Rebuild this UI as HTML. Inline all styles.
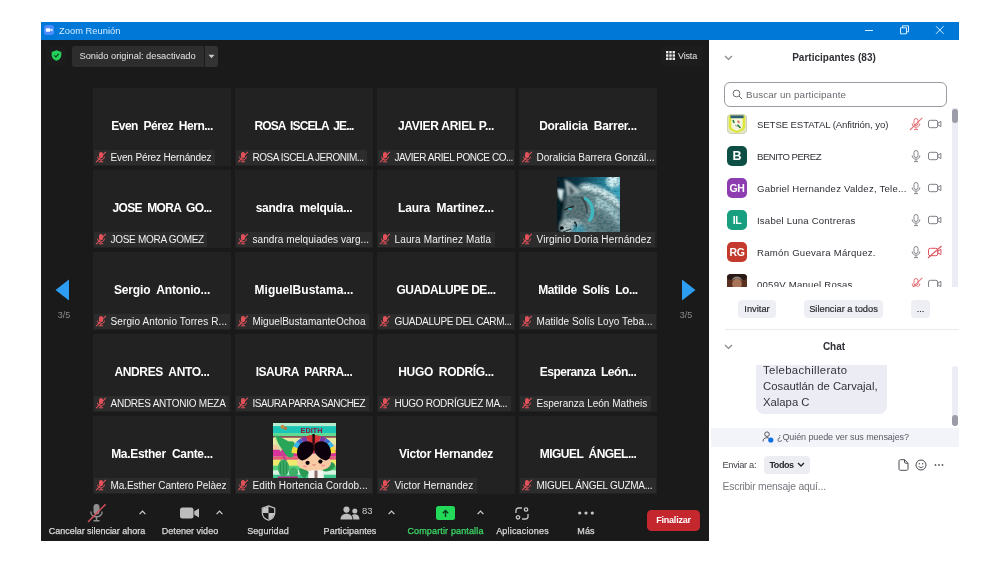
<!DOCTYPE html>
<html><head><meta charset="utf-8"><title>Zoom Reunión</title>
<style>
*{box-sizing:border-box;margin:0;padding:0}
html,body{width:1000px;height:563px;overflow:hidden;background:#fff;font-family:"Liberation Sans",sans-serif}
.abs{position:absolute}
#root{position:absolute;left:0;top:0;width:1000px;height:563px;will-change:transform;transform:translateZ(0)}
#win{position:absolute;left:41px;top:22px;width:918px;height:519px;background:#fff;overflow:hidden}
#title{position:absolute;left:0;top:0;width:918px;height:18px;background:#0078d7}
#title .tt{position:absolute;left:18px;top:3px;font-size:9.3px;line-height:12px;color:#d6ecff;white-space:pre}
#main{position:absolute;left:0;top:18px;width:668px;height:501px;background:#1a1a1a}
.tile{position:absolute;width:138px;height:78px;background:#222222;overflow:hidden}
.tile .big{position:absolute;left:0;right:0;top:29.5px;height:16px;line-height:16px;text-align:center;color:#fff;font-weight:700;font-size:12px;white-space:pre}
.tile .lab{position:absolute;left:1px;bottom:1px;height:15px;max-width:136px;background:#2c2c2c;color:#f2f2f2;font-size:10px;line-height:15px;padding:0 3.5px 0 16.5px;white-space:pre;overflow:hidden}
.tile .lab .mm{position:absolute;left:1.2px;top:0.7px}
.tile .pic{position:absolute;width:63px;height:63px;overflow:hidden}
.tb{position:absolute;top:525px;-webkit-text-stroke:0.250px #d8d8d8;height:12px;line-height:12px;font-size:9px;color:#d8d8d8;white-space:pre;text-align:center;transform:translateX(-50%)}
.chev{position:absolute}
#side{position:absolute;left:668px;top:18px;width:250px;height:500px;background:#fff}
.pname{position:absolute;left:757px;font-size:9.4px;line-height:12px;color:#2f2f36;white-space:pre}
.av{position:absolute;left:727px;width:20px;height:20px;border-radius:5px;color:#fff;font-weight:700;text-align:center;line-height:20px}
.btn{position:absolute;top:300px;height:18px;border-radius:4px;background:#eeeef5;color:#2a2a32;font-size:9.3px;line-height:18px;text-align:center;white-space:pre;-webkit-text-stroke:0.2px #2a2a32}
</style></head>
<body>
<div id="root">
<div id="win">
  <div id="title">
    <svg class="abs" style="left:3.300px;top:3.400px" width="10" height="10" viewBox="0 0 11 11"><rect width="11" height="11" rx="3" fill="#4a8cff"/><rect x="2" y="3.6" width="5" height="3.8" rx="1" fill="#fff"/><path d="M7.3 5.1L9.2 3.9v3.2L7.3 5.9z" fill="#fff"/></svg>
    <div class="tt"><span style="font-size:9.300px;font-weight:400;letter-spacing:0.038px">Zoom Reunión</span></div>
    <svg class="abs" style="left:822px;top:2px" width="84" height="14" viewBox="0 0 84 14"><g stroke="#d6f0ff" stroke-width="1" fill="none"><path d="M2 6.5h8"/><path d="M37.500 3.800h6v6h-6z"/><path d="M39.500 3.800v-2h6v6h-2"/><path d="M73 2.2l7.6 7.6M80.600 2.2L73 9.800"/></g></svg>
  </div>
</div>
<div id="main" style="left:41px;top:40px"></div>
<!-- top bar controls -->
<div class="abs" style="left:46px;top:46px;width:20px;height:20px;background:#1c1c1c;border-radius:2px"></div>
<svg class="abs" style="left:51px;top:50px" width="11" height="11" viewBox="0 0 11 11"><path d="M5.500 0.200L10.300 1.900v3.400c0 2.700-2.100 4.600-4.800 5.500C2.800 9.900 0.700 8 0.700 5.300V1.900z" fill="#23d05a"/><path d="M3.300 5.400l1.600 1.600L7.800 3.900" fill="none" stroke="#123d20" stroke-width="1.200"/></svg>
<div class="abs" style="left:72px;top:46px;width:132px;height:21px;background:#2d2d2d;border-radius:3px 0 0 3px"></div>
<div class="abs" style="left:205px;top:46px;width:13px;height:21px;background:#333333;border-radius:0 3px 3px 0"></div>
<div class="abs" style="left:79.500px;top:50px;font-size:9.300px;line-height:12px;color:#e4e4e4;white-space:pre"><span style="font-size:9.300px;font-weight:400;letter-spacing:-0.004px">Sonido original: desactivado</span></div>
<svg class="abs" style="left:208px;top:54px" width="7" height="5" viewBox="0 0 7 5"><path d="M0.500 0.800h6L3.500 4.200z" fill="#c8c8c8"/></svg>
<div class="abs" style="left:661px;top:46px;width:42px;height:20px;background:#1d1d1d;border-radius:3px"></div>
<svg class="abs" style="left:666px;top:51px" width="9" height="9" viewBox="0 0 9 9"><g fill="#e8e8e8"><rect x="0" y="0" width="2.400" height="2.400"/><rect x="3.300" y="0" width="2.400" height="2.400"/><rect x="6.600" y="0" width="2.400" height="2.400"/><rect x="0" y="3.300" width="2.400" height="2.400"/><rect x="3.300" y="3.300" width="2.400" height="2.400"/><rect x="6.600" y="3.300" width="2.400" height="2.400"/><rect x="0" y="6.600" width="2.400" height="2.400"/><rect x="3.300" y="6.600" width="2.400" height="2.400"/><rect x="6.600" y="6.600" width="2.400" height="2.400"/></g></svg>
<div class="abs" style="left:678px;top:49.500px;font-size:9px;line-height:12px;color:#e4e4e4;white-space:pre"><span style="font-size:9px;font-weight:400;letter-spacing:-0.165px">Vista</span></div>

<!-- tiles -->
<div class="tile" style="left:93px;top:88px"><div class="big" style="letter-spacing:-0.489px">Even  Pérez  Hern...</div><div class="lab"><svg class="mm" viewBox="0 0 12 12" width="12" height="12"><rect x="4" y="1" width="4" height="6.2" rx="2" fill="#e0515a"/><path d="M2.6 5.6c0 2 1.5 3.3 3.4 3.3s3.4-1.3 3.4-3.3" fill="none" stroke="#e0515a" stroke-width="1"/><path d="M6 9v1.6M3.8 10.8h4.4" stroke="#e0515a" stroke-width="1"/><path d="M1.2 11.2L10.8 0.8" stroke="#e0515a" stroke-width="1.1"/></svg><span style="letter-spacing:-0.132px">Even Pérez Hernández</span></div></div>
<div class="tile" style="left:235px;top:88px"><div class="big" style="letter-spacing:-0.878px">ROSA  ISCELA  JE...</div><div class="lab"><svg class="mm" viewBox="0 0 12 12" width="12" height="12"><rect x="4" y="1" width="4" height="6.2" rx="2" fill="#e0515a"/><path d="M2.6 5.6c0 2 1.5 3.3 3.4 3.3s3.4-1.3 3.4-3.3" fill="none" stroke="#e0515a" stroke-width="1"/><path d="M6 9v1.6M3.8 10.8h4.4" stroke="#e0515a" stroke-width="1"/><path d="M1.2 11.2L10.8 0.8" stroke="#e0515a" stroke-width="1.1"/></svg><span style="letter-spacing:-0.481px">ROSA ISCELA JERONIM...</span></div></div>
<div class="tile" style="left:377px;top:88px"><div class="big" style="letter-spacing:-0.276px">JAVIER ARIEL P...</div><div class="lab"><svg class="mm" viewBox="0 0 12 12" width="12" height="12"><rect x="4" y="1" width="4" height="6.2" rx="2" fill="#e0515a"/><path d="M2.6 5.6c0 2 1.5 3.3 3.4 3.3s3.4-1.3 3.4-3.3" fill="none" stroke="#e0515a" stroke-width="1"/><path d="M6 9v1.6M3.8 10.8h4.4" stroke="#e0515a" stroke-width="1"/><path d="M1.2 11.2L10.8 0.8" stroke="#e0515a" stroke-width="1.1"/></svg><span style="letter-spacing:-0.46px">JAVIER ARIEL PONCE CO...</span></div></div>
<div class="tile" style="left:519px;top:88px"><div class="big" style="letter-spacing:-0.249px">Doralicia  Barrer...</div><div class="lab"><svg class="mm" viewBox="0 0 12 12" width="12" height="12"><rect x="4" y="1" width="4" height="6.2" rx="2" fill="#e0515a"/><path d="M2.6 5.6c0 2 1.5 3.3 3.4 3.3s3.4-1.3 3.4-3.3" fill="none" stroke="#e0515a" stroke-width="1"/><path d="M6 9v1.6M3.8 10.8h4.4" stroke="#e0515a" stroke-width="1"/><path d="M1.2 11.2L10.8 0.8" stroke="#e0515a" stroke-width="1.1"/></svg><span style="letter-spacing:0.007px">Doralicia Barrera Gonzál...</span></div></div>
<div class="tile" style="left:93px;top:170px"><div class="big" style="letter-spacing:-0.672px">JOSE  MORA  GO...</div><div class="lab"><svg class="mm" viewBox="0 0 12 12" width="12" height="12"><rect x="4" y="1" width="4" height="6.2" rx="2" fill="#e0515a"/><path d="M2.6 5.6c0 2 1.5 3.3 3.4 3.3s3.4-1.3 3.4-3.3" fill="none" stroke="#e0515a" stroke-width="1"/><path d="M6 9v1.6M3.8 10.8h4.4" stroke="#e0515a" stroke-width="1"/><path d="M1.2 11.2L10.8 0.8" stroke="#e0515a" stroke-width="1.1"/></svg><span style="letter-spacing:-0.293px">JOSE MORA GOMEZ</span></div></div>
<div class="tile" style="left:235px;top:170px"><div class="big" style="letter-spacing:-0.257px">sandra  melquia...</div><div class="lab"><svg class="mm" viewBox="0 0 12 12" width="12" height="12"><rect x="4" y="1" width="4" height="6.2" rx="2" fill="#e0515a"/><path d="M2.6 5.6c0 2 1.5 3.3 3.4 3.3s3.4-1.3 3.4-3.3" fill="none" stroke="#e0515a" stroke-width="1"/><path d="M6 9v1.6M3.8 10.8h4.4" stroke="#e0515a" stroke-width="1"/><path d="M1.2 11.2L10.8 0.8" stroke="#e0515a" stroke-width="1.1"/></svg><span style="letter-spacing:0.063px">sandra melquiades varg...</span></div></div>
<div class="tile" style="left:377px;top:170px"><div class="big" style="letter-spacing:-0.119px">Laura  Martinez...</div><div class="lab"><svg class="mm" viewBox="0 0 12 12" width="12" height="12"><rect x="4" y="1" width="4" height="6.2" rx="2" fill="#e0515a"/><path d="M2.6 5.6c0 2 1.5 3.3 3.4 3.3s3.4-1.3 3.4-3.3" fill="none" stroke="#e0515a" stroke-width="1"/><path d="M6 9v1.6M3.8 10.8h4.4" stroke="#e0515a" stroke-width="1"/><path d="M1.2 11.2L10.8 0.8" stroke="#e0515a" stroke-width="1.1"/></svg><span style="letter-spacing:0.135px">Laura Martinez Matla</span></div></div>
<div class="tile" style="left:519px;top:170px"><div class="pic" style="left:38px;top:7px"><svg width="63" height="63" viewBox="0 0 63 63" style="display:block"><defs><filter id="wb1" x="-20%" y="-20%" width="140%" height="140%"><feGaussianBlur stdDeviation="1.500"/></filter><filter id="wb2" x="-20%" y="-20%" width="140%" height="140%"><feGaussianBlur stdDeviation="0.600"/></filter><filter id="wb3" x="-20%" y="-20%" width="140%" height="140%"><feGaussianBlur stdDeviation="1"/></filter><filter id="wn" x="0" y="0" width="100%" height="100%"><feTurbulence type="fractalNoise" baseFrequency="0.300 0.500" numOctaves="2" seed="7" result="n"/><feColorMatrix in="n" type="matrix" values="0 0 0 0 0  0 0 0 0 0.050  0 0 0 0 0.080  0 0 0 -1.000 0.620"/></filter><linearGradient id="wbg" x1="0" y1="0" x2="1" y2="0"><stop offset="0" stop-color="#06171f"/><stop offset="0.350" stop-color="#0d3646"/><stop offset="0.700" stop-color="#237c94"/><stop offset="1" stop-color="#3aa6bc"/></linearGradient><clipPath id="wcp"><rect width="63" height="63"/></clipPath></defs>
<g clip-path="url(#wcp)"><rect width="63" height="63" fill="url(#wbg)"/>
<g filter="url(#wb1)">
<rect x="-4" y="20" width="12" height="47" fill="#05131a"/>
<ellipse cx="56" cy="4" rx="7" ry="7" fill="#d4f2f7"/>
<ellipse cx="60" cy="15" rx="5" ry="6" fill="#3aa9c2"/>
<path d="M22 8C34 4 52 12 64 26V66H8L6 40 10 18z" fill="#6f8c90"/>
<path d="M24 7C36 4 54 13 63 25L62 31C52 20 38 13 26 13z" fill="#d9eef0"/>
<path d="M38 20C48 20 58 28 62 38V48C54 36 46 30 38 30z" fill="#a5c6ca"/>
<path d="M38 36C46 38 56 46 62 56V64H40z" fill="#5f7c80"/>
<path d="M8 20C16 16 26 18 30 24L30 42 10 46z" fill="#637678"/>
<path d="M4 45C10 41 20 41 24 45L24 56H6L3 52z" fill="#b4c2c2"/>
<path d="M16 48C20 46 26 48 28 52V60H14z" fill="#4f9fb2"/>
</g>
<rect width="63" height="63" filter="url(#wn)"/>
<g filter="url(#wb3)">
<path d="M7.500 2.500C12 4 20 10 23.500 16L10 19z" fill="#a3b6ba"/>
<path d="M12 8L18 15 13 18z" fill="#38484c"/>
<path d="M0 11.500L7 12.500 5 25 1.500 20z" fill="#d4e8ea"/>
</g>
<g filter="url(#wb2)">
<path d="M27 21C32 23 35.500 28 35.500 34S34 42 32 44" fill="none" stroke="#41b8c0" stroke-width="3.400"/>
<path d="M24 20C28 24 30 30 30 36" fill="none" stroke="#3a4a4e" stroke-width="1.800"/>
<path d="M7 33L17 29" stroke="#1c2c30" stroke-width="1.800"/>
<ellipse cx="13" cy="32" rx="2" ry="1" fill="#3ab8c0"/>
<ellipse cx="4.800" cy="51" rx="2" ry="1.800" fill="#06090c"/>
<path d="M17 45C19 46 20 48 19 50" fill="none" stroke="#1a2a30" stroke-width="1.400"/>
<path d="M6 55L14 52" stroke="#1a2a30" stroke-width="1"/>
</g></g></svg>
</div><div class="lab"><svg class="mm" viewBox="0 0 12 12" width="12" height="12"><rect x="4" y="1" width="4" height="6.2" rx="2" fill="#e0515a"/><path d="M2.6 5.6c0 2 1.5 3.3 3.4 3.3s3.4-1.3 3.4-3.3" fill="none" stroke="#e0515a" stroke-width="1"/><path d="M6 9v1.6M3.8 10.8h4.4" stroke="#e0515a" stroke-width="1"/><path d="M1.2 11.2L10.8 0.8" stroke="#e0515a" stroke-width="1.1"/></svg><span style="letter-spacing:0.15px">Virginio Doria Hernández</span></div></div>
<div class="tile" style="left:93px;top:252px"><div class="big" style="letter-spacing:-0.152px">Sergio  Antonio...</div><div class="lab"><svg class="mm" viewBox="0 0 12 12" width="12" height="12"><rect x="4" y="1" width="4" height="6.2" rx="2" fill="#e0515a"/><path d="M2.6 5.6c0 2 1.5 3.3 3.4 3.3s3.4-1.3 3.4-3.3" fill="none" stroke="#e0515a" stroke-width="1"/><path d="M6 9v1.6M3.8 10.8h4.4" stroke="#e0515a" stroke-width="1"/><path d="M1.2 11.2L10.8 0.8" stroke="#e0515a" stroke-width="1.1"/></svg><span style="letter-spacing:0.113px">Sergio Antonio Torres R...</span></div></div>
<div class="tile" style="left:235px;top:252px"><div class="big" style="letter-spacing:0.014px">MiguelBustama...</div><div class="lab"><svg class="mm" viewBox="0 0 12 12" width="12" height="12"><rect x="4" y="1" width="4" height="6.2" rx="2" fill="#e0515a"/><path d="M2.6 5.6c0 2 1.5 3.3 3.4 3.3s3.4-1.3 3.4-3.3" fill="none" stroke="#e0515a" stroke-width="1"/><path d="M6 9v1.6M3.8 10.8h4.4" stroke="#e0515a" stroke-width="1"/><path d="M1.2 11.2L10.8 0.8" stroke="#e0515a" stroke-width="1.1"/></svg><span style="letter-spacing:0.035px">MiguelBustamanteOchoa</span></div></div>
<div class="tile" style="left:377px;top:252px"><div class="big" style="letter-spacing:-0.465px">GUADALUPE DE...</div><div class="lab"><svg class="mm" viewBox="0 0 12 12" width="12" height="12"><rect x="4" y="1" width="4" height="6.2" rx="2" fill="#e0515a"/><path d="M2.6 5.6c0 2 1.5 3.3 3.4 3.3s3.4-1.3 3.4-3.3" fill="none" stroke="#e0515a" stroke-width="1"/><path d="M6 9v1.6M3.8 10.8h4.4" stroke="#e0515a" stroke-width="1"/><path d="M1.2 11.2L10.8 0.8" stroke="#e0515a" stroke-width="1.1"/></svg><span style="letter-spacing:-0.335px">GUADALUPE DEL CARM...</span></div></div>
<div class="tile" style="left:519px;top:252px"><div class="big" style="letter-spacing:-0.401px">Matilde  Solís  Lo...</div><div class="lab"><svg class="mm" viewBox="0 0 12 12" width="12" height="12"><rect x="4" y="1" width="4" height="6.2" rx="2" fill="#e0515a"/><path d="M2.6 5.6c0 2 1.5 3.3 3.4 3.3s3.4-1.3 3.4-3.3" fill="none" stroke="#e0515a" stroke-width="1"/><path d="M6 9v1.6M3.8 10.8h4.4" stroke="#e0515a" stroke-width="1"/><path d="M1.2 11.2L10.8 0.8" stroke="#e0515a" stroke-width="1.1"/></svg><span style="letter-spacing:0.067px">Matilde Solís Loyo Teba...</span></div></div>
<div class="tile" style="left:93px;top:334px"><div class="big" style="letter-spacing:-0.378px">ANDRES  ANTO...</div><div class="lab"><svg class="mm" viewBox="0 0 12 12" width="12" height="12"><rect x="4" y="1" width="4" height="6.2" rx="2" fill="#e0515a"/><path d="M2.6 5.6c0 2 1.5 3.3 3.4 3.3s3.4-1.3 3.4-3.3" fill="none" stroke="#e0515a" stroke-width="1"/><path d="M6 9v1.6M3.8 10.8h4.4" stroke="#e0515a" stroke-width="1"/><path d="M1.2 11.2L10.8 0.8" stroke="#e0515a" stroke-width="1.1"/></svg><span style="letter-spacing:-0.247px">ANDRES ANTONIO MEZA</span></div></div>
<div class="tile" style="left:235px;top:334px"><div class="big" style="letter-spacing:-0.454px">ISAURA  PARRA...</div><div class="lab"><svg class="mm" viewBox="0 0 12 12" width="12" height="12"><rect x="4" y="1" width="4" height="6.2" rx="2" fill="#e0515a"/><path d="M2.6 5.6c0 2 1.5 3.3 3.4 3.3s3.4-1.3 3.4-3.3" fill="none" stroke="#e0515a" stroke-width="1"/><path d="M6 9v1.6M3.8 10.8h4.4" stroke="#e0515a" stroke-width="1"/><path d="M1.2 11.2L10.8 0.8" stroke="#e0515a" stroke-width="1.1"/></svg><span style="letter-spacing:-0.531px">ISAURA PARRA SANCHEZ</span></div></div>
<div class="tile" style="left:377px;top:334px"><div class="big" style="letter-spacing:-0.355px">HUGO  RODRÍG...</div><div class="lab"><svg class="mm" viewBox="0 0 12 12" width="12" height="12"><rect x="4" y="1" width="4" height="6.2" rx="2" fill="#e0515a"/><path d="M2.6 5.6c0 2 1.5 3.3 3.4 3.3s3.4-1.3 3.4-3.3" fill="none" stroke="#e0515a" stroke-width="1"/><path d="M6 9v1.6M3.8 10.8h4.4" stroke="#e0515a" stroke-width="1"/><path d="M1.2 11.2L10.8 0.8" stroke="#e0515a" stroke-width="1.1"/></svg><span style="letter-spacing:-0.311px">HUGO RODRÍGUEZ MA...</span></div></div>
<div class="tile" style="left:519px;top:334px"><div class="big" style="letter-spacing:-0.487px">Esperanza  León...</div><div class="lab"><svg class="mm" viewBox="0 0 12 12" width="12" height="12"><rect x="4" y="1" width="4" height="6.2" rx="2" fill="#e0515a"/><path d="M2.6 5.6c0 2 1.5 3.3 3.4 3.3s3.4-1.3 3.4-3.3" fill="none" stroke="#e0515a" stroke-width="1"/><path d="M6 9v1.6M3.8 10.8h4.4" stroke="#e0515a" stroke-width="1"/><path d="M1.2 11.2L10.8 0.8" stroke="#e0515a" stroke-width="1.1"/></svg><span style="letter-spacing:0.008px">Esperanza León Matheis</span></div></div>
<div class="tile" style="left:93px;top:416px"><div class="big" style="letter-spacing:-0.299px">Ma.Esther  Cante...</div><div class="lab"><svg class="mm" viewBox="0 0 12 12" width="12" height="12"><rect x="4" y="1" width="4" height="6.2" rx="2" fill="#e0515a"/><path d="M2.6 5.6c0 2 1.5 3.3 3.4 3.3s3.4-1.3 3.4-3.3" fill="none" stroke="#e0515a" stroke-width="1"/><path d="M6 9v1.6M3.8 10.8h4.4" stroke="#e0515a" stroke-width="1"/><path d="M1.2 11.2L10.8 0.8" stroke="#e0515a" stroke-width="1.1"/></svg><span style="letter-spacing:-0.056px">Ma.Esther Cantero Pelàez</span></div></div>
<div class="tile" style="left:235px;top:416px"><div class="pic" style="left:38px;top:7px"><svg width="63" height="63" viewBox="0 0 63 63" style="display:block"><defs><filter id="eb" x="-10%" y="-10%" width="120%" height="120%"><feGaussianBlur stdDeviation="0.45"/></filter><clipPath id="ecp"><rect width="63" height="63"/></clipPath></defs>
<g clip-path="url(#ecp)"><g filter="url(#eb)">
<rect width="63" height="63" fill="#7fdcae"/>
<rect y="0" width="63" height="3.200" fill="#b4ecd0"/>
<rect y="3.200" width="63" height="7" fill="#1ec6b6"/>
<rect y="10.200" width="63" height="3" fill="#5edb92"/>
<rect y="13.200" width="63" height="1.600" fill="#8c3444"/>
<rect y="14.800" width="63" height="7" fill="#e9eaa2"/>
<rect y="21.800" width="63" height="5" fill="#f3c9a0"/>
<rect y="26.800" width="63" height="6.500" fill="#d8339a"/>
<rect y="33.300" width="63" height="3.500" fill="#e85a78"/>
<rect y="36.800" width="63" height="6" fill="#efe96c"/>
<rect y="42.800" width="63" height="4.500" fill="#58cf7c"/>
<rect y="47.300" width="63" height="4.500" fill="#d6f3e0"/>
<rect y="51.800" width="63" height="5" fill="#3fc98f"/>
<rect y="56.800" width="63" height="6.200" fill="#2ab8a8"/>
<text x="27.500" y="9.600" font-family="Liberation Sans" font-weight="700" font-size="7.500" fill="#8c1c34" textLength="22" lengthAdjust="spacingAndGlyphs">EDITH</text>
<circle cx="9.500" cy="3.800" r="2" fill="#c98a4a"/><circle cx="12.500" cy="5.200" r="1.600" fill="#b5743a"/>
<!-- map -->
<path d="M1 12.500C6 12 12 17 16 18.500 20 17.500 22.500 19 21.500 22 20 26 22 30 20 33.500 17 36 13 33 11 29 8 24 3 19 1 12.500z" fill="#2aa65a"/>
<path d="M2 14C4 20 7 27 10.500 33" fill="none" stroke="#c8e8a0" stroke-width="1.400"/>
<path d="M8 28C10 32 12 36 13 38" stroke="#c4408c" stroke-width="2"/>
<!-- cactus & pot -->
<ellipse cx="10.500" cy="45" rx="5.600" ry="8.500" fill="#37a862"/>
<ellipse cx="20.500" cy="49.500" rx="4.600" ry="5" fill="#3cae66"/>
<path d="M10.500 38v14M7.500 40v11M13.500 40v11" stroke="#2a8c50" stroke-width="0.800"/>
<path d="M4.500 53.500H25L23.500 61H6z" fill="#a2267e"/>
<!-- leaves right -->
<path d="M50 41C54 38 60 38 62 42 61 47 55 49.500 50 48z" fill="#2c9a52"/>
<path d="M26 46C30 44 34 46 36 50L32 55C28 54 26 50 26 46z" fill="#2c9a52"/>
<!-- headband -->
<g transform="translate(40.600 26) scale(1.050 1.030)">
<path d="M0 6L-21.00 4.00A21 17.500 0 0 1 -19.47 -2.56z" fill="#f2dc3c"/>
<path d="M0 6L-19.47 -2.56A21 17.500 0 0 1 -16.09 -7.25z" fill="#3ab4e8"/>
<path d="M0 6L-16.09 -7.25A21 17.500 0 0 1 -12.34 -10.16z" fill="#3a6ad0"/>
<path d="M0 6L-12.34 -10.16A21 17.500 0 0 1 -7.18 -12.44z" fill="#7a3aa8"/>
<path d="M0 6L-7.18 -12.44A21 17.500 0 0 1 7.18 -12.44z" fill="#d8353a"/>
<path d="M0 6L7.18 -12.44A21 17.500 0 0 1 12.34 -10.16z" fill="#7a3aa8"/>
<path d="M0 6L12.34 -10.16A21 17.500 0 0 1 16.09 -7.25z" fill="#3a6ad0"/>
<path d="M0 6L16.09 -7.25A21 17.500 0 0 1 19.47 -2.56z" fill="#3ab4e8"/>
<path d="M0 6L19.47 -2.56A21 17.500 0 0 1 21.00 4.00z" fill="#f2dc3c"/>
<path d="M-1.200 -14.500L1.200 -14.500L1 -5L-1 -5z" fill="#1a0a10"/>
</g>
<!-- face -->
<ellipse cx="41" cy="39.500" rx="17" ry="9" fill="#f8cba4"/>
<!-- hair -->
<path d="M40.800 21.500C34 14.500 24 19.500 24 30C24 35.500 28 38.500 31 37C36 35 40 31 40.800 27z" fill="#0c0608"/>
<path d="M41.200 21.500C48 14.500 58 19.500 58 30C58 35.500 54 38.500 51 37C46 35 42 31 41.200 27z" fill="#0c0608"/>
<circle cx="34.600" cy="39.800" r="2.100" fill="#0c0608"/><circle cx="47.400" cy="38.600" r="2.100" fill="#0c0608"/>
<ellipse cx="32" cy="43.500" rx="2" ry="1" fill="#f29a94"/><ellipse cx="50" cy="42.500" rx="2" ry="1" fill="#f29a94"/>
<path d="M39.500 41.500c1 1 2.200 1 3.200 0" fill="none" stroke="#d04a5a" stroke-width="0.700"/>
<!-- body -->
<path d="M36 48C39 46.500 47 46.500 50 48L51 55H35z" fill="#f6f4f0"/>
<path d="M41.500 47.500h3v8h-3z" fill="#8a6a6a"/>
<path d="M34 55H52V63H34z" fill="#7a3a4a"/>
</g></g></svg>
</div><div class="lab"><svg class="mm" viewBox="0 0 12 12" width="12" height="12"><rect x="4" y="1" width="4" height="6.2" rx="2" fill="#e0515a"/><path d="M2.6 5.6c0 2 1.5 3.3 3.4 3.3s3.4-1.3 3.4-3.3" fill="none" stroke="#e0515a" stroke-width="1"/><path d="M6 9v1.6M3.8 10.8h4.4" stroke="#e0515a" stroke-width="1"/><path d="M1.2 11.2L10.8 0.8" stroke="#e0515a" stroke-width="1.1"/></svg><span style="letter-spacing:0.13px">Edith Hortencia Cordob...</span></div></div>
<div class="tile" style="left:377px;top:416px"><div class="big" style="letter-spacing:-0.266px">Victor Hernandez</div><div class="lab"><svg class="mm" viewBox="0 0 12 12" width="12" height="12"><rect x="4" y="1" width="4" height="6.2" rx="2" fill="#e0515a"/><path d="M2.6 5.6c0 2 1.5 3.3 3.4 3.3s3.4-1.3 3.4-3.3" fill="none" stroke="#e0515a" stroke-width="1"/><path d="M6 9v1.6M3.8 10.8h4.4" stroke="#e0515a" stroke-width="1"/><path d="M1.2 11.2L10.8 0.8" stroke="#e0515a" stroke-width="1.1"/></svg><span style="letter-spacing:0.114px">Victor Hernandez</span></div></div>
<div class="tile" style="left:519px;top:416px"><div class="big" style="letter-spacing:-0.535px">MIGUEL  ÁNGEL...</div><div class="lab"><svg class="mm" viewBox="0 0 12 12" width="12" height="12"><rect x="4" y="1" width="4" height="6.2" rx="2" fill="#e0515a"/><path d="M2.6 5.6c0 2 1.5 3.3 3.4 3.3s3.4-1.3 3.4-3.3" fill="none" stroke="#e0515a" stroke-width="1"/><path d="M6 9v1.6M3.8 10.8h4.4" stroke="#e0515a" stroke-width="1"/><path d="M1.2 11.2L10.8 0.8" stroke="#e0515a" stroke-width="1.1"/></svg><span style="letter-spacing:-0.275px">MIGUEL ÁNGEL GUZMA...</span></div></div>

<!-- page arrows -->
<svg class="abs" style="left:55px;top:279px" width="15" height="22" viewBox="0 0 15 22"><path d="M14 0.500v21L0.500 11z" fill="#2d9df2"/></svg>
<div class="abs" style="left:50px;top:309px;width:28px;text-align:center;font-size:9px;line-height:12px;color:#8a8a8a">3/5</div>
<svg class="abs" style="left:680.500px;top:279px" width="15" height="22" viewBox="0 0 15 22"><path d="M1 0.500v21L14.500 11z" fill="#2d9df2"/></svg>
<div class="abs" style="left:672px;top:309px;width:28px;text-align:center;font-size:9px;line-height:12px;color:#8a8a8a">3/5</div>

<!-- toolbar -->
<svg class="abs" style="left:86px;top:503px" width="22" height="20" viewBox="0 0 22 20"><rect x="7.500" y="1" width="6" height="10.500" rx="3" fill="#8f8f8f"/><path d="M4.800 8.500c0 3.300 2.500 5.300 5.700 5.300s5.700-2 5.700-5.300" fill="none" stroke="#8f8f8f" stroke-width="1.400"/><path d="M10.500 14v3.500M7.500 17.800h6" stroke="#8f8f8f" stroke-width="1.400"/><path d="M2 19L19.600 1.200" stroke="#d9505c" stroke-width="1.400"/></svg>
<div class="tb" style="left:97px"><span style="font-size:9px;font-weight:400;letter-spacing:-0.033px">Cancelar silenciar ahora</span></div>
<svg class="abs" style="left:138.500px;top:510px" width="7" height="5" viewBox="0 0 7 5"><path d="M0.600 4.200L3.500 1.200l2.900 3" fill="none" stroke="#d0d0d0" stroke-width="1.200"/></svg>
<svg class="abs" style="left:180px;top:507px" width="20" height="12" viewBox="0 0 20 12"><rect x="0" y="0.500" width="13.500" height="11" rx="2.500" fill="#bdbdbd"/><path d="M14.300 4.300L19 1.500v9l-4.700-2.800z" fill="#bdbdbd"/></svg>
<div class="tb" style="left:190px"><span style="font-size:9px;font-weight:400;letter-spacing:0.029px">Detener video</span></div>
<svg class="abs" style="left:215.500px;top:510px" width="7" height="5" viewBox="0 0 7 5"><path d="M0.600 4.200L3.500 1.200l2.900 3" fill="none" stroke="#d0d0d0" stroke-width="1.200"/></svg>
<svg class="abs" style="left:260.500px;top:504.500px" width="15" height="16.500" viewBox="0 0 16 18"><path d="M8 1L14.800 3.400v5c0 4-2.900 6.800-6.800 8.200C4.100 15.200 1.200 12.400 1.200 8.400v-5z" fill="#1a1a1a" stroke="#c4c4c4" stroke-width="1.300"/><path d="M8 1.600L1.800 3.800v4.800H8z" fill="#c4c4c4"/><path d="M8 8.600h6.200c0 3.600-2.700 6.100-6.200 7.400z" fill="#c4c4c4"/></svg>
<div class="tb" style="left:268px"><span style="font-size:9px;font-weight:400;letter-spacing:0.069px">Seguridad</span></div>
<svg class="abs" style="left:340px;top:506px" width="20" height="14" viewBox="0 0 20 14"><g fill="#bdbdbd"><circle cx="6.500" cy="3.600" r="3.100"/><path d="M0.500 13.500c0-3.600 2.500-5.700 6-5.700s6 2.100 6 5.700z"/><circle cx="14.800" cy="5" r="2.500"/><path d="M13.300 13.500c0-2-0.500-3.200-1.500-4.300 0.800-0.700 1.800-1 3-1 2.700 0 4.700 1.800 4.700 5.300z"/></g></svg>
<div class="abs" style="left:362px;top:505px;font-size:9.500px;line-height:12px;color:#c8c8c8">83</div>
<div class="tb" style="left:350px"><span style="font-size:9px;font-weight:400;letter-spacing:0.064px">Participantes</span></div>
<svg class="abs" style="left:387.500px;top:510px" width="7" height="5" viewBox="0 0 7 5"><path d="M0.600 4.200L3.500 1.200l2.900 3" fill="none" stroke="#d0d0d0" stroke-width="1.200"/></svg>
<div class="abs" style="left:436px;top:506px;width:19px;height:14px;border-radius:2.500px;background:#23d959"></div>
<svg class="abs" style="left:441px;top:508.500px" width="9" height="9" viewBox="0 0 9 9"><path d="M4.500 8V1.800M1.800 4.300L4.500 1.500l2.700 2.800" fill="none" stroke="#0d3d1c" stroke-width="1.400"/></svg>
<div class="tb" style="left:445.500px;color:#3cd867;-webkit-text-stroke-color:#3cd867"><span style="font-size:9px;font-weight:400;letter-spacing:0.144px">Compartir pantalla</span></div>
<svg class="abs" style="left:477px;top:510px" width="7" height="5" viewBox="0 0 7 5"><path d="M0.600 4.200L3.500 1.200l2.900 3" fill="none" stroke="#d0d0d0" stroke-width="1.200"/></svg>
<svg class="abs" style="left:515px;top:507px" width="14" height="13" viewBox="0 0 14 13"><g fill="none" stroke="#c4c4c4" stroke-width="1.300"><path d="M1 6V3.500c0-1.500 1-2.500 2.500-2.500H7"/><path d="M13 7v2.500c0 1.500-1 2.500-2.500 2.500H7"/><circle cx="11" cy="2.500" r="1.700"/><circle cx="3" cy="10.300" r="1.700"/></g></svg>
<div class="tb" style="left:522.500px"><span style="font-size:9px;font-weight:400;letter-spacing:0.179px">Aplicaciones</span></div>
<svg class="abs" style="left:577px;top:510px" width="18" height="6" viewBox="0 0 18 6"><g fill="#c8c8c8"><circle cx="2.700" cy="3" r="1.600"/><circle cx="9" cy="3" r="1.600"/><circle cx="15.300" cy="3" r="1.600"/></g></svg>
<div class="tb" style="left:586px"><span style="font-size:9px;font-weight:400;letter-spacing:0.192px">Más</span></div>
<div class="abs" style="left:647px;top:510px;width:53px;height:21px;border-radius:4.500px;background:#c4272e;color:#fff;font-weight:700;font-size:9px;line-height:21px;text-align:center;letter-spacing:-0.200px">Finalizar</div>

<!-- side panel -->
<svg class="abs" style="left:724px;top:54.500px" width="9" height="6" viewBox="0 0 9 6"><path d="M1 1l3.500 3.500L8 1" fill="none" stroke="#85858d" stroke-width="1.200"/></svg>
<div class="abs" style="left:734px;top:51px;width:200px;text-align:center;font-size:10px;line-height:13px;font-weight:700;color:#2f2f36;white-space:pre"><span style="font-size:10px;font-weight:700;letter-spacing:0.019px">Participantes (83)</span></div>
<div class="abs" style="left:724px;top:82px;width:223px;height:25px;border:1px solid #9a9aa2;border-radius:6px;background:#fff"></div>
<svg class="abs" style="left:732px;top:89px" width="11" height="11" viewBox="0 0 11 11"><circle cx="4.500" cy="4.500" r="3.400" fill="none" stroke="#6e6e76" stroke-width="1"/><path d="M7 7l3 3" stroke="#6e6e76" stroke-width="1"/></svg>
<div class="abs" style="left:746px;top:88px;font-size:9.400px;line-height:13px;color:#6a6a72;white-space:pre"><span style="font-size:9.800px;font-weight:400;letter-spacing:0.12px">Buscar un participante</span></div>

<!-- list clip -->
<div class="abs" style="left:711px;top:108px;width:248px;height:179px;overflow:hidden">
 <div style="position:absolute;left:-711px;top:-108px;width:1000px;height:563px">
  <svg class="abs" style="left:727px;top:114px" width="20" height="20" viewBox="0 0 20 20"><rect width="20" height="20" rx="4.500" fill="#e6e8c2"/><rect x="0.400" y="0.400" width="19.200" height="19.200" rx="4.200" fill="none" stroke="#c4c6b8" stroke-width="0.800"/><path d="M1.800 1.600h16.400v11.200c0 3.200-4.400 4.800-8.200 6.200-3.800-1.400-8.200-3-8.200-6.200z" fill="#dfe63a"/><path d="M4.400 4.200h11.200v8c0 2.400-3 3.600-5.600 4.600-2.600-1-5.600-2.200-5.600-4.600z" fill="#f4f6e2"/><rect x="3.400" y="1.400" width="13.200" height="2.800" fill="#2d5f78"/><path d="M6 6l1.200 3M13.500 14l-3-3.200" stroke="#2c7a3a" stroke-width="1.600"/><path d="M10.500 7l2 1.500" stroke="#e2664e" stroke-width="1.600"/><path d="M8 11l2.500 1.600" stroke="#8a9a90" stroke-width="1"/></svg>
  <div class="pname" style="top:119px"><span style="font-size:9.6px;font-weight:400;letter-spacing:-0.093px">SETSE ESTATAL (Anfitrión, yo)</span></div>
  <div class="av" style="top:146px;background:#0d4f45;font-size:12.500px">B</div>
  <div class="pname" style="top:151px"><span style="font-size:9.6px;font-weight:400;letter-spacing:-0.518px">BENITO PEREZ</span></div>
  <div class="av" style="top:178px;background:#8e3db0;font-size:10.500px;letter-spacing:-0.300px">GH</div>
  <div class="pname" style="top:183px"><span style="font-size:9.6px;font-weight:400;letter-spacing:0.213px">Gabriel Hernandez Valdez, Tele...</span></div>
  <div class="av" style="top:210px;background:#179f80;font-size:10.500px;letter-spacing:-0.300px">IL</div>
  <div class="pname" style="top:215px"><span style="font-size:9.6px;font-weight:400;letter-spacing:0.2px">Isabel Luna Contreras</span></div>
  <div class="av" style="top:242px;background:#c43a2c;font-size:10.500px;letter-spacing:-0.300px">RG</div>
  <div class="pname" style="top:247px"><span style="font-size:9.6px;font-weight:400;letter-spacing:0.26px">Ramón Guevara Márquez.</span></div>
  <svg class="abs" style="left:727px;top:274px" width="20" height="20" viewBox="0 0 20 20"><rect width="20" height="20" rx="4.500" fill="#5a3020"/><rect x="0" y="0" width="20" height="6" rx="4" fill="#2a1a16"/><ellipse cx="10" cy="10" rx="4.800" ry="5.600" fill="#a87458"/><path d="M4.600 7c0.800-3.400 3-4.600 5.400-4.600s4.600 1.200 5.400 4.600c-1.600-1.600-3.400-2.200-5.400-2.200s-3.800 0.600-5.400 2.200z" fill="#8d8078"/><path d="M0 20v-3.500c2-1.800 4-2.500 5.500-2.800 1.200 1.400 2.800 2 4.500 2s3.300-0.600 4.500-2c1.500 0.300 3.500 1 5.500 2.800V20z" fill="#3a2a2a"/></svg>
  <div class="pname" style="top:279px"><span style="font-size:9.6px;font-weight:400;letter-spacing:0.216px">0059V Manuel Rosas</span></div>
  <svg class="abs" style="left:909px;top:117px" width="14" height="14" viewBox="0 0 14 14"><g fill="none" stroke="#e4737a" stroke-width="1"><rect x="5" y="1.500" width="4" height="7" rx="2"/><path d="M3.200 6.500c0 2.300 1.600 3.700 3.800 3.700s3.800-1.400 3.800-3.700"/><path d="M7 10.200v2.200M5 12.600h4"/><path d="M1 13L13.200 0.800" stroke-width="1.100"/></g></svg>
<svg class="abs" style="left:926.5px;top:117px" width="16" height="14" viewBox="0 0 16 14"><g fill="none" stroke="#7d7d85" stroke-width="1"><rect x="1.500" y="3.300" width="9.200" height="7.400" rx="1.800"/><path d="M10.700 6.100l3.200-1.700v5.200L10.700 7.900z"/></g></svg>
<svg class="abs" style="left:909px;top:149px" width="14" height="14" viewBox="0 0 14 14"><g fill="none" stroke="#85858d" stroke-width="1"><rect x="5" y="1.500" width="4" height="7" rx="2"/><path d="M3.200 6.500c0 2.300 1.600 3.700 3.800 3.700s3.800-1.400 3.800-3.700"/><path d="M7 10.200v2.200M5 12.600h4"/></g></svg>
<svg class="abs" style="left:926.5px;top:149px" width="16" height="14" viewBox="0 0 16 14"><g fill="none" stroke="#7d7d85" stroke-width="1"><rect x="1.500" y="3.300" width="9.200" height="7.400" rx="1.800"/><path d="M10.700 6.100l3.200-1.700v5.200L10.700 7.900z"/></g></svg>
<svg class="abs" style="left:909px;top:181px" width="14" height="14" viewBox="0 0 14 14"><g fill="none" stroke="#85858d" stroke-width="1"><rect x="5" y="1.500" width="4" height="7" rx="2"/><path d="M3.200 6.500c0 2.300 1.600 3.700 3.800 3.700s3.800-1.400 3.800-3.700"/><path d="M7 10.200v2.200M5 12.600h4"/></g></svg>
<svg class="abs" style="left:926.5px;top:181px" width="16" height="14" viewBox="0 0 16 14"><g fill="none" stroke="#7d7d85" stroke-width="1"><rect x="1.500" y="3.300" width="9.200" height="7.400" rx="1.800"/><path d="M10.700 6.100l3.200-1.700v5.200L10.700 7.900z"/></g></svg>
<svg class="abs" style="left:909px;top:213px" width="14" height="14" viewBox="0 0 14 14"><g fill="none" stroke="#85858d" stroke-width="1"><rect x="5" y="1.500" width="4" height="7" rx="2"/><path d="M3.200 6.500c0 2.300 1.600 3.700 3.800 3.700s3.800-1.400 3.800-3.700"/><path d="M7 10.200v2.200M5 12.600h4"/></g></svg>
<svg class="abs" style="left:926.5px;top:213px" width="16" height="14" viewBox="0 0 16 14"><g fill="none" stroke="#7d7d85" stroke-width="1"><rect x="1.500" y="3.300" width="9.200" height="7.400" rx="1.800"/><path d="M10.700 6.100l3.200-1.700v5.200L10.700 7.900z"/></g></svg>
<svg class="abs" style="left:909px;top:245px" width="14" height="14" viewBox="0 0 14 14"><g fill="none" stroke="#85858d" stroke-width="1"><rect x="5" y="1.500" width="4" height="7" rx="2"/><path d="M3.200 6.500c0 2.300 1.600 3.700 3.800 3.700s3.800-1.400 3.800-3.700"/><path d="M7 10.200v2.200M5 12.600h4"/></g></svg>
<svg class="abs" style="left:926.5px;top:245px" width="16" height="14" viewBox="0 0 16 14"><g fill="none" stroke="#d8525c" stroke-width="1"><rect x="1.500" y="3.300" width="9.200" height="7.400" rx="1.800"/><path d="M10.700 6.100l3.200-1.700v5.200L10.700 7.900z"/></g><path d="M1 13L14.500 1" stroke="#d8525c" stroke-width="1.100"/></svg>
<svg class="abs" style="left:909px;top:277px" width="14" height="14" viewBox="0 0 14 14"><g fill="none" stroke="#e4737a" stroke-width="1"><rect x="5" y="1.500" width="4" height="7" rx="2"/><path d="M3.200 6.500c0 2.300 1.600 3.700 3.800 3.700s3.800-1.400 3.800-3.700"/><path d="M7 10.200v2.200M5 12.600h4"/><path d="M1 13L13.200 0.800" stroke-width="1.100"/></g></svg>
<svg class="abs" style="left:926.5px;top:277px" width="16" height="14" viewBox="0 0 16 14"><g fill="none" stroke="#7d7d85" stroke-width="1"><rect x="1.500" y="3.300" width="9.200" height="7.400" rx="1.800"/><path d="M10.700 6.100l3.200-1.700v5.200L10.700 7.900z"/></g></svg>
  <div class="abs" style="left:952px;top:108px;width:6px;height:179px;background:#ececf5"></div>
  <div class="abs" style="left:952px;top:109px;width:6px;height:13.500px;border-radius:3px;background:#9c9ca8"></div>
 </div>
</div>

<div class="btn" style="left:738px;width:38px">Invitar</div>
<div class="btn" style="left:804px;width:79px">Silenciar a todos</div>
<div class="btn" style="left:911px;width:19px">...</div>
<div class="abs" style="left:725px;top:329px;width:234px;height:1px;background:#e9e9ee"></div>

<svg class="abs" style="left:724px;top:344px" width="9" height="6" viewBox="0 0 9 6"><path d="M1 1l3.500 3.500L8 1" fill="none" stroke="#85858d" stroke-width="1.200"/></svg>
<div class="abs" style="left:734px;top:340px;width:200px;text-align:center;font-size:10px;line-height:13px;font-weight:700;color:#2f2f36;white-space:pre">Chat</div>

<div class="abs" style="left:711px;top:365px;width:248px;height:62px;overflow:hidden">
  <div class="abs" style="left:45px;top:-20px;width:131px;height:69px;border-radius:8px;background:#ececf4"></div>
  <div class="abs" style="left:52px;top:-2.700px;font-size:11.300px;line-height:16px;color:#33333b;white-space:pre"><span style="font-size:11.300px;font-weight:400;letter-spacing:0.367px">Telebachillerato</span>
<span style="font-size:11.300px;font-weight:400;letter-spacing:0.014px">Cosautlán de Carvajal,</span>
<span style="font-size:11.300px;font-weight:400;letter-spacing:0.002px">Xalapa C</span></div>
  <div class="abs" style="left:241px;top:1px;width:6px;height:60px;background:#ececf4;border-radius:3px"></div>
  <div class="abs" style="left:241px;top:50px;width:6px;height:10.500px;border-radius:3px;background:#9c9ca8"></div>
</div>
<div class="abs" style="left:711px;top:428px;width:248px;height:19px;background:#f3f4fa"></div>
<svg class="abs" style="left:762px;top:431px" width="12" height="12" viewBox="0 0 12 12"><circle cx="5" cy="3.200" r="2.300" fill="none" stroke="#55555f" stroke-width="1"/><path d="M1 10.500c0-2.400 1.600-3.800 4-3.800 0.800 0 1.500 0.200 2 0.500" fill="none" stroke="#55555f" stroke-width="1"/><circle cx="8.800" cy="9" r="2.600" fill="#0e6fe0"/></svg>
<div class="abs" style="left:777px;top:431px;font-size:9px;line-height:12px;color:#5a5a64;white-space:pre"><span style="font-size:9px;font-weight:400;letter-spacing:-0.089px">¿Quién puede ver sus mensajes?</span></div>

<div class="abs" style="left:722.500px;top:458.500px;font-size:9.300px;line-height:12px;color:#44444c;white-space:pre"><span style="font-size:9.300px;font-weight:400;letter-spacing:-0.338px">Enviar a:</span></div>
<div class="abs" style="left:764px;top:456px;width:46px;height:18px;border-radius:4px;background:#ececf3"></div>
<div class="abs" style="left:769.500px;top:458.500px;font-size:9.300px;line-height:12px;color:#24242c;white-space:pre;font-weight:700"><span style="font-size:9px;font-weight:700;letter-spacing:-0.457px">Todos</span></div>
<svg class="abs" style="left:797px;top:462px" width="8" height="6" viewBox="0 0 8 6"><path d="M1 1l3 3 3-3" fill="none" stroke="#24242c" stroke-width="1.400"/></svg>
<svg class="abs" style="left:898px;top:459px" width="11" height="12" viewBox="0 0 11 12"><path d="M2.500 0.700h4L10 4.200v5.600c0 0.900-0.600 1.500-1.500 1.500h-6C1.600 11.300 1 10.700 1 9.800V2.200C1 1.300 1.600 0.700 2.500 0.700z" fill="none" stroke="#4a4a52" stroke-width="1"/><path d="M6.500 0.700v2.500c0 0.600 0.400 1 1 1H10" fill="none" stroke="#4a4a52" stroke-width="1"/></svg>
<svg class="abs" style="left:915px;top:459px" width="12" height="12" viewBox="0 0 12 12"><circle cx="6" cy="6" r="5" fill="none" stroke="#4a4a52" stroke-width="1"/><circle cx="4.300" cy="4.800" r="0.700" fill="#4a4a52"/><circle cx="7.700" cy="4.800" r="0.700" fill="#4a4a52"/><path d="M3.700 7.200c0.500 1 1.300 1.500 2.300 1.500s1.800-0.500 2.300-1.500" fill="none" stroke="#4a4a52" stroke-width="0.900"/></svg>
<svg class="abs" style="left:934px;top:463px" width="10" height="4" viewBox="0 0 10 4"><g fill="#55555f"><circle cx="1.500" cy="2" r="0.900"/><circle cx="5" cy="2" r="0.900"/><circle cx="8.500" cy="2" r="0.900"/></g></svg>
<div class="abs" style="left:722.500px;top:480px;font-size:10.300px;line-height:13px;color:#77777f;white-space:pre"><span style="font-size:10.300px;font-weight:400;letter-spacing:-0.178px">Escribir mensaje aquí...</span></div>

</div>
</body></html>
